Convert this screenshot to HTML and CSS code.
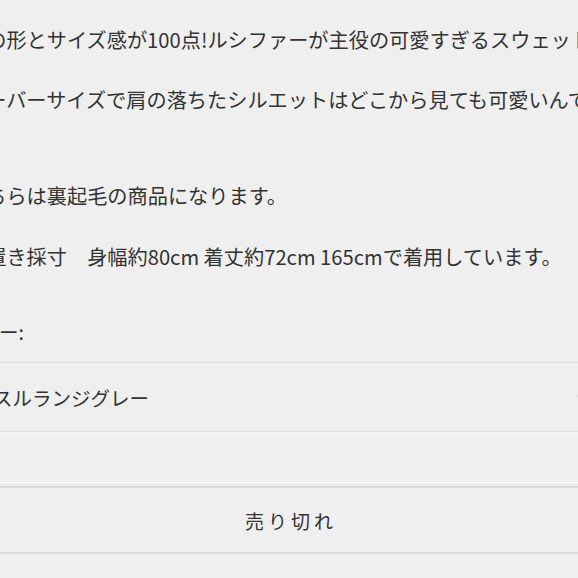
FILE: index.html
```html
<!DOCTYPE html>
<html lang="ja">
<head>
  <meta charset="UTF-8">
  <meta name="viewport" content="width=device-width, initial-scale=1.0">
  <title>商品詳細</title>
  <link rel="stylesheet" href="styles.css">
</head>
<body>
  <div class="product">
    <div class="description">
      <p class="line-1">この形とサイズ感が100点!ルシファーが主役の可愛すぎるスウェットです。</p>
      <p class="line-2">オーバーサイズで肩の落ちたシルエットはどこから見ても可愛いんです。</p>
      <p class="line-3">こちらは裏起毛の商品になります。</p>
      <p class="line-4">平置き採寸　身幅約80cm 着丈約72cm 165cmで着用しています。</p>
      <label class="option-label" for="color">カラー:</label>
    </div>

    <div class="form">
      <div class="select-box" id="color">
        <span class="select-value">スルランジグレー</span>
        <svg class="chevron" width="10" height="7" viewBox="0 0 10 7">
          <path d="M1 1.5 L5 5.5 L9 1.5" fill="none" stroke="#222" stroke-width="1.5"/>
        </svg>
      </div>
      <button class="btn-soldout" disabled>売り切れ</button>
    </div>
  </div>
</body>
</html>
```

FILE: styles.css
```css
body {
  margin: 0;
  background: #efefef;
  color: #333;
  font-family: "Noto Sans CJK JP", "Noto Sans", sans-serif;
  overflow: hidden;
}
.product {
  padding-top: 25px;
}
.description {
  margin-left: -34px;
  white-space: nowrap;
}
.description p {
  margin: 0;
  font-size: 20.2px;
  line-height: 30px;
}
.line-2 {
  margin-top: 30px !important;
}
.line-3 {
  margin-top: 66px !important;
}
.line-4 {
  margin-top: 31px !important;
}
.option-label {
  display: block;
  margin: 45px 0 0 -6px;
  font-size: 19.5px;
  line-height: 30px;
}
.form {
  margin: 0 -12px;
}
.select-box {
  display: flex;
  align-items: center;
  justify-content: space-between;
  height: 68px;
  margin-top: 15px;
  padding: 0 2px 0 4px;
  border: 1px solid #dcdcdc;
  box-shadow: 0 1px 0 #f8f8f8;
  font-size: 19.5px;
  color: #333;
  white-space: nowrap;
}
.chevron {
  flex-shrink: 0;
}
.btn-soldout {
  display: block;
  width: 100%;
  height: 68px;
  margin-top: 54px;
  padding: 0 0 0 4px;
  background: #efefef;
  border: 2px solid #dadada;
  outline: 1px solid #fafafa;
  outline-offset: 3px;
  color: #333;
  font-family: inherit;
  font-size: 19px;
  letter-spacing: 4px;
}
```
